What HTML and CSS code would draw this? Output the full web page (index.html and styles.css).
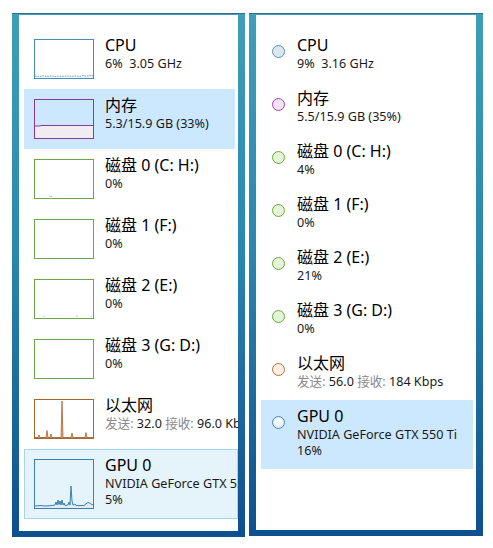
FILE: index.html
```html
<!DOCTYPE html>
<html lang="zh-CN">
<head>
    <meta charset="UTF-8">
    <title>任务管理器 - 性能</title>
    <link rel="stylesheet" href="styles.css">
</head>
<body>
<div class="screen">

    <!-- graph view -->
    <div class="win">
        <div class="pane">
            <div class="item">
                <svg class="graph" width="60" height="40" viewBox="0 0 60 40">
                    <polyline class="cpu-fill" points="1,39 1,37 5,37.5 9,36.8 13,37.4 17,36.9 21,37.5 25,37 29,37.4 33,36.8 37,37.3 41,36.9 45,37.4 49,36.6 53,37.2 56,36.2 59,36.8 59,39"/>
                    <polyline class="cpu-line" points="1,37 5,37.5 9,36.8 13,37.4 17,36.9 21,37.5 25,37 29,37.4 33,36.8 37,37.3 41,36.9 45,37.4 49,36.6 53,37.2 56,36.2 59,36.8"/>
                    <rect class="cpu-box" x="0.5" y="0.5" width="59" height="39"/>
                </svg>
                <div class="info">
                    <div class="name">CPU</div>
                    <div class="sub">6%&nbsp; 3.05 GHz</div>
                </div>
            </div>
            <div class="item active">
                <svg class="graph" width="60" height="40" viewBox="0 0 60 40">
                    <polygon class="mem-fill" points="1,27 6,27 7,26.5 59,26.5 59,39 1,39"/>
                    <polyline class="mem-line" points="1,27 6,27 7,26.5 59,26.5"/>
                    <rect class="mem-box" x="0.5" y="0.5" width="59" height="39"/>
                </svg>
                <div class="info">
                    <div class="name">内存</div>
                    <div class="sub">5.3/15.9 GB (33%)</div>
                </div>
            </div>
            <div class="item">
                <svg class="graph" width="60" height="40" viewBox="0 0 60 40">
                    <line class="disk-tick" x1="16" y1="38" x2="16" y2="36.5"/>
                    <line class="disk-tick" x1="17.5" y1="38" x2="17.5" y2="37"/>
                    <rect class="disk-box" x="0.5" y="0.5" width="59" height="39"/>
                </svg>
                <div class="info">
                    <div class="name">磁盘 0 (C: H:)</div>
                    <div class="sub">0%</div>
                </div>
            </div>
            <div class="item">
                <svg class="graph" width="60" height="40" viewBox="0 0 60 40">
                    <rect class="disk-box" x="0.5" y="0.5" width="59" height="39"/>
                </svg>
                <div class="info">
                    <div class="name">磁盘 1 (F:)</div>
                    <div class="sub">0%</div>
                </div>
            </div>
            <div class="item">
                <svg class="graph" width="60" height="40" viewBox="0 0 60 40">
                    <line class="disk-tick" x1="10" y1="38" x2="10" y2="37"/>
                    <line class="disk-tick" x1="43" y1="38" x2="43" y2="36.5"/>
                    <line class="disk-tick" x1="57" y1="38" x2="57" y2="37"/>
                    <rect class="disk-box" x="0.5" y="0.5" width="59" height="39"/>
                </svg>
                <div class="info">
                    <div class="name">磁盘 2 (E:)</div>
                    <div class="sub">0%</div>
                </div>
            </div>
            <div class="item">
                <svg class="graph" width="60" height="40" viewBox="0 0 60 40">
                    <rect class="disk-box" x="0.5" y="0.5" width="59" height="39"/>
                </svg>
                <div class="info">
                    <div class="name">磁盘 3 (G: D:)</div>
                    <div class="sub">0%</div>
                </div>
            </div>
            <div class="item">
                <svg class="graph" width="60" height="40" viewBox="0 0 60 40">
                    <polygon class="net-fill" points="1,39 1,38.5 4,38.5 5,36 6,38.5 12,38.5 13,31.5 14,38.5 16,38.5 17,35 18,38.5 27,38.5 28,2 29,38.5 37,38.5 38,34 39,38.5 51,38.5 52,33.5 53,38.5 59,38.5 59,39"/>
                    <rect class="net-box" x="0.5" y="0.5" width="59" height="39"/>
                </svg>
                <div class="info">
                    <div class="name">以太网</div>
                    <div class="sub"><span class="dim">发送:</span> 32.0 <span class="dim">接收:</span> 96.0 Kbps</div>
                </div>
            </div>
            <div class="item focus wide">
                <svg class="graph" width="60" height="50" viewBox="0 0 60 50">
                    <polygon class="gpu-fill" points="1,49 1,47 6,46.5 12,47 18,46.5 21,46 22,43 23,46 24,41 25,45.5 26,42 27,46 28,41 29,46 30,44 31,46.5 34,46 35,43 36,46 37,27 38,42 39,46 41,45 42,46.5 50,46.5 53,44 55,43.5 57,45 59,46 59,49"/>
                    <polyline class="gpu-line" points="1,47 6,46.5 12,47 18,46.5 21,46 22,43 23,46 24,41 25,45.5 26,42 27,46 28,41 29,46 30,44 31,46.5 34,46 35,43 36,46 37,27 38,42 39,46 41,45 42,46.5 50,46.5 53,44 55,43.5 57,45 59,46"/>
                    <rect class="gpu-box" x="0.5" y="0.5" width="59" height="49"/>
                </svg>
                <div class="info">
                    <div class="name">GPU 0</div>
                    <div class="sub">NVIDIA GeForce GTX 550 Ti</div>
                    <div class="sub">5%</div>
                </div>
            </div>
        </div>
    </div>

    <!-- summary view -->
    <div class="win summary">
        <div class="pane">
            <div class="item">
                <span class="dot dot-cpu"></span>
                <div class="info">
                    <div class="name">CPU</div>
                    <div class="sub">9%&nbsp; 3.16 GHz</div>
                </div>
            </div>
            <div class="item">
                <span class="dot dot-mem"></span>
                <div class="info">
                    <div class="name">内存</div>
                    <div class="sub">5.5/15.9 GB (35%)</div>
                </div>
            </div>
            <div class="item">
                <span class="dot dot-disk"></span>
                <div class="info">
                    <div class="name">磁盘 0 (C: H:)</div>
                    <div class="sub">4%</div>
                </div>
            </div>
            <div class="item">
                <span class="dot dot-disk"></span>
                <div class="info">
                    <div class="name">磁盘 1 (F:)</div>
                    <div class="sub">0%</div>
                </div>
            </div>
            <div class="item">
                <span class="dot dot-disk"></span>
                <div class="info">
                    <div class="name">磁盘 2 (E:)</div>
                    <div class="sub">21%</div>
                </div>
            </div>
            <div class="item">
                <span class="dot dot-disk"></span>
                <div class="info">
                    <div class="name">磁盘 3 (G: D:)</div>
                    <div class="sub">0%</div>
                </div>
            </div>
            <div class="item">
                <span class="dot dot-net"></span>
                <div class="info">
                    <div class="name">以太网</div>
                    <div class="sub"><span class="dim">发送:</span> 56.0 <span class="dim">接收:</span> 184 Kbps</div>
                </div>
            </div>
            <div class="item active">
                <span class="dot dot-gpu"></span>
                <div class="info">
                    <div class="name">GPU 0</div>
                    <div class="sub">NVIDIA GeForce GTX 550 Ti</div>
                    <div class="sub">16%</div>
                </div>
            </div>
        </div>
    </div>

</div>
</body>
</html>
```

FILE: styles.css
```css
body{
    margin: 0;
    background-color: #ffffff;
    font-family: "Noto Sans", "Noto Sans CJK SC", sans-serif;
    color: #000000;
}
.screen{
    display: flex;
    gap: 4px;
    padding: 13px 0 0 12px;
}

/* window frame: thin top edge, thick gradient sides */
.win{
    width: 233px;
    height: 524px;
    box-sizing: border-box;
    padding: 1px 7px 6px 7px;
    background: linear-gradient(#3d9fba, #2b87ae 45%, #0e4f8f 100%);
    border-top: 1px solid #2f6f88;
}
.win.summary{
    width: 234px;
    height: 523px;
}
.pane{
    height: 100%;
    background-color: #ffffff;
    padding: 14px 3px 0 5px;
    box-sizing: border-box;
    overflow: hidden;
}

.item{
    display: flex;
    align-items: flex-start;
    padding: 5px 0 10px 10px;
    white-space: nowrap;
}
.item.active{
    background-color: #cce8ff;
}
.item.focus{
    background-color: #e5f3fb;
    box-shadow: inset 0 0 0 1px #a8d3ef;
}
.item.wide{
    margin-right: -3px;
}

.graph{
    display: block;
    flex: none;
    margin-top: 5px;
    margin-right: 11px;
}
.info{
    display: flex;
    flex-direction: column;
}
.name{
    font-size: 16px;
    line-height: 22px;
}
.sub{
    font-size: 12.6px;
    line-height: 16px;
    color: #1a1a1a;
}
.dim{
    color: #8a8a8a;
}

/* graph strokes */
.graph rect{
    fill: none;
    stroke-width: 1;
}
.cpu-box{ stroke: #4a8db5; }
.cpu-line{ fill: none; stroke: #4a8db5; stroke-width: 0.8; stroke-dasharray: 1.5 1; }
.cpu-fill{ fill: #eef5fa; stroke: none; }
.mem-box{ stroke: #8b3a9a; }
.mem-line{ fill: none; stroke: #8b3a9a; stroke-width: 1; }
.mem-fill{ fill: #f1ecf2; }
.disk-box{ stroke: #71a34a; }
.disk-tick{ stroke: #9bc27c; stroke-width: 1; }
.net-box{ stroke: #a7662e; }
.net-fill{ fill: #d9b08a; stroke: #a7662e; stroke-width: 0.8; }
.gpu-box{ stroke: #3f7fae; }
.gpu-line{ fill: none; stroke: #3f7fae; stroke-width: 1; }
.gpu-fill{ fill: #dfecf6; }

/* summary dots */
.dot{
    flex: none;
    width: 11px;
    height: 11px;
    border-radius: 50%;
    border: 1px solid;
    margin: 11px 12px 0 1px;
}
.dot-cpu{ border-color: #5a8fc2; background-color: #dbe8f4; }
.dot-mem{ border-color: #a443b3; background-color: #f6e2f8; }
.dot-disk{ border-color: #6aaa3c; background-color: #e4f4d7; }
.dot-net{ border-color: #b8733c; background-color: #fbeee2; }
.dot-gpu{ border-color: #4f86c0; background: radial-gradient(circle at 50% 40%, #ffffff, #d4e4f2); }
```
